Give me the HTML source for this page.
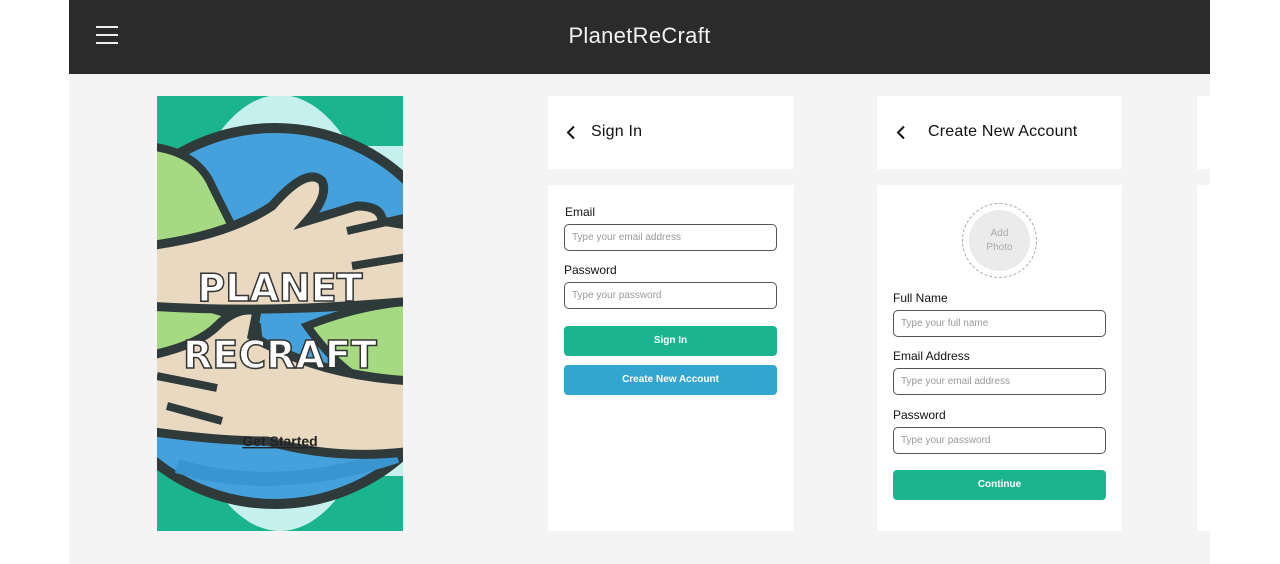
<!DOCTYPE html>
<html><head><meta charset="utf-8"><style>
*{margin:0;padding:0;box-sizing:border-box}
body{width:1280px;height:564px;background:#fff;position:relative;overflow:hidden;font-family:"Liberation Sans",sans-serif;color:#111}
.a{position:absolute}
.bg{left:69px;top:0;width:1141px;height:564px;background:#f4f4f4}
.hdr{left:69px;top:0;width:1141px;height:74px;background:#2b2b2b}
.hb{left:96px;width:22px;height:2px;background:#eee}
.title{left:69px;width:1141px;top:23px;text-align:center;color:#f2f2f2;font-size:22px;letter-spacing:.3px}
.card{background:#fff}
.lbl{font-size:12px;color:#111}
.inp{height:27px;border:1.3px solid #555;border-radius:5px;font-size:10px;color:#999;padding:7px 7px;background:#fff}
.btn{height:30px;border-radius:4px;color:#fff;font-size:10px;font-weight:bold;text-align:center;line-height:30px}
.h{font-size:16px;color:#111;letter-spacing:.2px}
</style></head><body>
<div class="a bg"></div>
<div class="a hdr"></div>
<div class="a hb" style="top:26px"></div><div class="a hb" style="top:34px"></div><div class="a hb" style="top:42px"></div>
<div class="a title">PlanetReCraft</div>

<svg class="a" style="left:157px;top:96px" width="246" height="435" viewBox="0 0 246 435">
<defs><clipPath id="c"><rect width="246" height="435"/></clipPath></defs>
<g clip-path="url(#c)">
<rect width="246" height="435" fill="#1ab58e"/>
<ellipse cx="123" cy="217" rx="108" ry="218" fill="#c5f0ee"/>
<rect x="200" y="50" width="46" height="330" fill="#c5f0ee"/>
<ellipse cx="118" cy="220" rx="190" ry="188" fill="#45a1dc" stroke="#2f3b3b" stroke-width="10"/>
<path d="M20 370 Q120 400 240 360" fill="none" stroke="#3a94d0" stroke-width="14"/>
<path d="M-10 50 Q40 55 55 90 Q70 120 80 140 L-10 160Z" fill="#a6da82" stroke="#2f3b3b" stroke-width="8"/>
<path d="M-10 200 Q60 210 100 230 L110 320 L-10 320Z" fill="#a6da82" stroke="#2f3b3b" stroke-width="8"/>
<path d="M150 230 Q200 210 256 205 L256 300 Q200 300 150 230Z" fill="#a6da82" stroke="#2f3b3b" stroke-width="8"/>
<path d="M-10 150 Q70 140 115 110 Q150 70 165 85 Q172 100 150 125 L200 110 Q225 110 225 125 L256 130 L256 205 Q200 210 150 212 Q60 215 -10 210Z" fill="#e8d9c0" stroke="#2f3b3b" stroke-width="9"/>
<path d="M190 135 L256 120 M195 170 L256 160" stroke="#2f3b3b" stroke-width="8"/>
<path d="M-10 260 Q40 250 60 230 Q80 210 100 215 L95 240 Q160 280 256 285 L256 355 Q180 365 110 345 Q60 345 -10 335Z" fill="#e8d9c0" stroke="#2f3b3b" stroke-width="9"/>
<path d="M10 310 L65 325 M0 280 L60 292" stroke="#2f3b3b" stroke-width="8"/>
<text x="123" y="205" text-anchor="middle" font-family="DejaVu Sans" font-weight="bold" font-size="38" fill="#fff" stroke="#333" stroke-width="1.5">PLANET</text>
<text x="123" y="272" text-anchor="middle" font-family="DejaVu Sans" font-weight="bold" font-size="38" fill="#fff" stroke="#333" stroke-width="1.5">RECRAFT</text>
<text x="123" y="350" text-anchor="middle" font-family="Liberation Sans" font-weight="bold" font-size="14" fill="#222" text-decoration="underline">Get Started</text>
</g>
</svg>

<div class="a card" style="left:548px;top:96px;width:246px;height:73px"></div>
<div class="a card" style="left:548px;top:185px;width:246px;height:346px"></div>
<svg class="a" style="left:566px;top:125px" width="10" height="15"><polyline points="8,1.5 2,7.5 8,13.5" fill="none" stroke="#111" stroke-width="2"/></svg>
<div class="a h" style="left:591px;top:123px">Sign In</div>
<div class="a lbl" style="left:565px;top:205px">Email</div>
<div class="a inp" style="left:564px;top:224px;width:213px">Type your email address</div>
<div class="a lbl" style="left:564px;top:263px">Password</div>
<div class="a inp" style="left:564px;top:282px;width:213px">Type your password</div>
<div class="a btn" style="left:564px;top:326px;width:213px;background:#1ab58e">Sign In</div>
<div class="a btn" style="left:564px;top:365px;width:213px;background:#32a6d0">Create New Account</div>

<div class="a card" style="left:877px;top:96px;width:245px;height:73px"></div>
<div class="a card" style="left:877px;top:185px;width:245px;height:346px"></div>
<svg class="a" style="left:896px;top:125px" width="10" height="15"><polyline points="8,1.5 2,7.5 8,13.5" fill="none" stroke="#111" stroke-width="2"/></svg>
<div class="a h" style="left:928px;top:123px">Create New Account</div>
<div class="a" style="left:962px;top:203px;width:75px;height:75px;border:1.5px dashed #aaa;border-radius:50%"></div>
<div class="a" style="left:969px;top:210px;width:61px;height:61px;background:#ebebeb;border-radius:50%;color:#aaa;font-size:10px;text-align:center;padding-top:17px;line-height:14px">Add<br>Photo</div>
<div class="a lbl" style="left:893px;top:291px">Full Name</div>
<div class="a inp" style="left:893px;top:310px;width:213px">Type your full name</div>
<div class="a lbl" style="left:893px;top:349px">Email Address</div>
<div class="a inp" style="left:893px;top:368px;width:213px">Type your email address</div>
<div class="a lbl" style="left:893px;top:408px">Password</div>
<div class="a inp" style="left:893px;top:427px;width:213px">Type your password</div>
<div class="a btn" style="left:893px;top:470px;width:213px;background:#1ab58e">Continue</div>

<div class="a card" style="left:1197px;top:96px;width:13px;height:73px"></div>
<div class="a card" style="left:1197px;top:185px;width:13px;height:346px"></div>
</body></html>
